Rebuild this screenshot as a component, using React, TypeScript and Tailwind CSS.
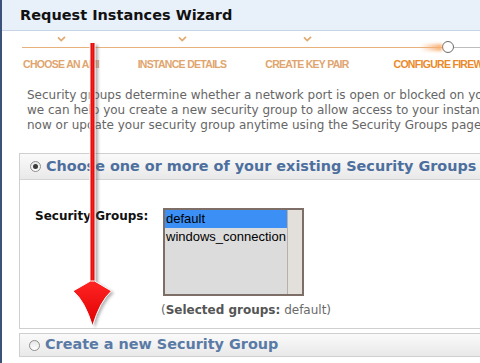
import React from 'react';

const steps = [
  { label: 'Choose an AMI', width: 'w-[118px]', done: true },
  { label: 'Instance Details', width: 'w-[124px]', done: true },
  { label: 'Create Key Pair', width: 'w-[126px]', done: true },
  { label: 'Configure Firewall', width: 'w-[154px]', done: false },
];

const Check: React.FC = () => (
  <svg width="9" height="6" viewBox="0 0 9 6">
    <path d="M1 1.4 L4.2 4.6 L8 0.8" fill="none" stroke="#e2ab74" strokeWidth="1.8" />
  </svg>
);

const Radio: React.FC<{ checked?: boolean }> = ({ checked }) => (
  <span className="flex h-[11px] w-[11px] shrink-0 items-center justify-center rounded-full border border-[#8d8d8d] bg-gradient-to-b from-[#e6e6e6] to-[#ffffff]">
    {checked && <span className="h-[5px] w-[5px] rounded-full bg-[#3a3a3a]" />}
  </span>
);

const Arrow: React.FC = () => (
  <svg className="pointer-events-none absolute left-0 top-0" width="480" height="363" viewBox="0 0 480 363">
    <defs>
      <linearGradient id="shaft" x1="0" x2="1" y1="0" y2="0">
        <stop offset="0" stopColor="#d40000" />
        <stop offset="0.5" stopColor="#ff1a1a" />
        <stop offset="1" stopColor="#d00000" />
      </linearGradient>
      <linearGradient id="head" x1="0" x2="0" y1="0" y2="1">
        <stop offset="0" stopColor="#ff2424" />
        <stop offset="1" stopColor="#e00000" />
      </linearGradient>
      <filter id="shadow" x="-50%" y="-10%" width="200%" height="120%">
        <feGaussianBlur stdDeviation="1.5" />
      </filter>
    </defs>
    {/* soft shadow */}
    <g filter="url(#shadow)" opacity="0.45" transform="translate(3 2)">
      <rect x="88" y="43" width="5" height="240" fill="#555" />
      <path d="M88 281 L71 291 Q83 301 90 326 Q97 301 109 291 L93 281 Z" fill="#555" />
    </g>
    <rect x="87.5" y="43" width="6" height="240" fill="#ffffff" />
    <rect x="88.5" y="43" width="4" height="241" fill="url(#shaft)" />
    <path
      d="M88.5 281 L71 291 Q83 301 90.5 326 Q98 301 109.5 291 L92.5 281 Z"
      fill="url(#head)"
      stroke="#ffffff"
      strokeWidth="1"
      strokeLinejoin="round"
    />
  </svg>
);

export default function App() {
  return (
    <div className="relative h-[363px] w-[480px] overflow-hidden border-l-2 border-[#3b5379] bg-white font-['DejaVu_Sans',sans-serif]">
      <div className="flex w-[760px] flex-col">
        {/* Title bar */}
        <div className="flex h-[31px] items-center border-b border-[#c6d4e4] bg-[#e8f0fa] pl-[18px]">
          <h1 className="pt-px text-[14.5px] font-bold text-[#111]">Request Instances Wizard</h1>
        </div>

        {/* Progress steps */}
        <div className="flex h-[11px] items-end">
          {steps.map((s) => (
            <div key={s.label} className={`flex ${s.width} justify-center`}>
              {s.done && <Check />}
            </div>
          ))}
        </div>
        <div className="-mt-px flex h-[12px] items-center">
          <div className="w-[20px]" />
          <div className="relative h-px w-[420px] bg-[#e8b07a]">
            <div className="absolute -top-[3px] right-0 h-[7px] w-[22px] rounded-l-full bg-gradient-to-r from-transparent to-[#f7ad70] blur-[1.5px]" />
          </div>
          <div className="h-[12px] w-[12px] rounded-full border-[1.5px] border-[#6b6b6b] bg-white" />
          <div className="h-px w-[200px] bg-[#bdbdbd]" />
        </div>
        <div className="mt-[5px] flex h-[12px]">
          {steps.map((s) => (
            <div
              key={s.label}
              className={`flex ${s.width} justify-center whitespace-nowrap font-['Liberation_Sans',sans-serif] text-[10.5px] font-bold uppercase leading-[12px] tracking-[-0.7px] ${
                s.done ? 'text-[#e0a56e]' : 'text-[#ea8a2a]'
              }`}
            >
              {s.label}
            </div>
          ))}
        </div>

        {/* Intro */}
        <p className="mt-[18px] whitespace-nowrap pl-[25px] text-[12px] leading-[15px] text-[#666]">
          Security groups determine whether a network port is open or blocked on your instances. You may use a security
          <br />
          we can help you create a new security group to allow access to your instances using the suggested ports below.
          <br />
          now or update your security group anytime using the Security Groups page.
        </p>

        {/* Existing groups panel */}
        <div className="ml-[17px] mt-[20px] border border-[#cfcfcf]">
          <div className="flex h-[26px] items-center gap-[5px] border-b border-[#d4d4d4] bg-gradient-to-b from-[#fafafa] to-[#e9e9e9] pl-[10px]">
            <Radio checked />
            <span className="text-[14.4px] font-bold text-[#4d6f9e]">Choose one or more of your existing Security Groups</span>
          </div>
          <div className="flex pb-[11px] pt-[28px]">
            <div className="w-[143px] pl-[15px] pt-px text-[12px] font-bold leading-[14px] text-[#111]">Security Groups:</div>
            <div className="flex flex-col">
              <div className="flex h-[88px] w-[141px] border-2 border-[#7d6f68] bg-[#dcdcdc]">
                <div className="flex-1 font-['Liberation_Sans',sans-serif] text-[13px] leading-[18px] text-black">
                  <div className="bg-[#3c8ff5] pl-[1px]">default</div>
                  <div className="pl-[1px]">windows_connection</div>
                </div>
                <div className="w-[15px] border-l border-[#b9b0aa] bg-[#e3dfdb]" />
              </div>
              <p className="-ml-[2px] mt-[7px] whitespace-nowrap text-[12px] leading-[14px] text-[#6a6a6a]">
                (<b className="text-[#555]">Selected groups:</b> default)
              </p>
            </div>
          </div>
        </div>

        {/* New group panel */}
        <div className="ml-[17px] mt-[4px] border border-[#cfcfcf]">
          <div className="flex h-[22px] items-center gap-[5px] bg-gradient-to-b from-[#fafafa] to-[#e9e9e9] pl-[9px]">
            <Radio />
            <span className="text-[14.4px] font-bold text-[#5a7aa6]">Create a new Security Group</span>
          </div>
        </div>
      </div>

      <Arrow />
    </div>
  );
}
